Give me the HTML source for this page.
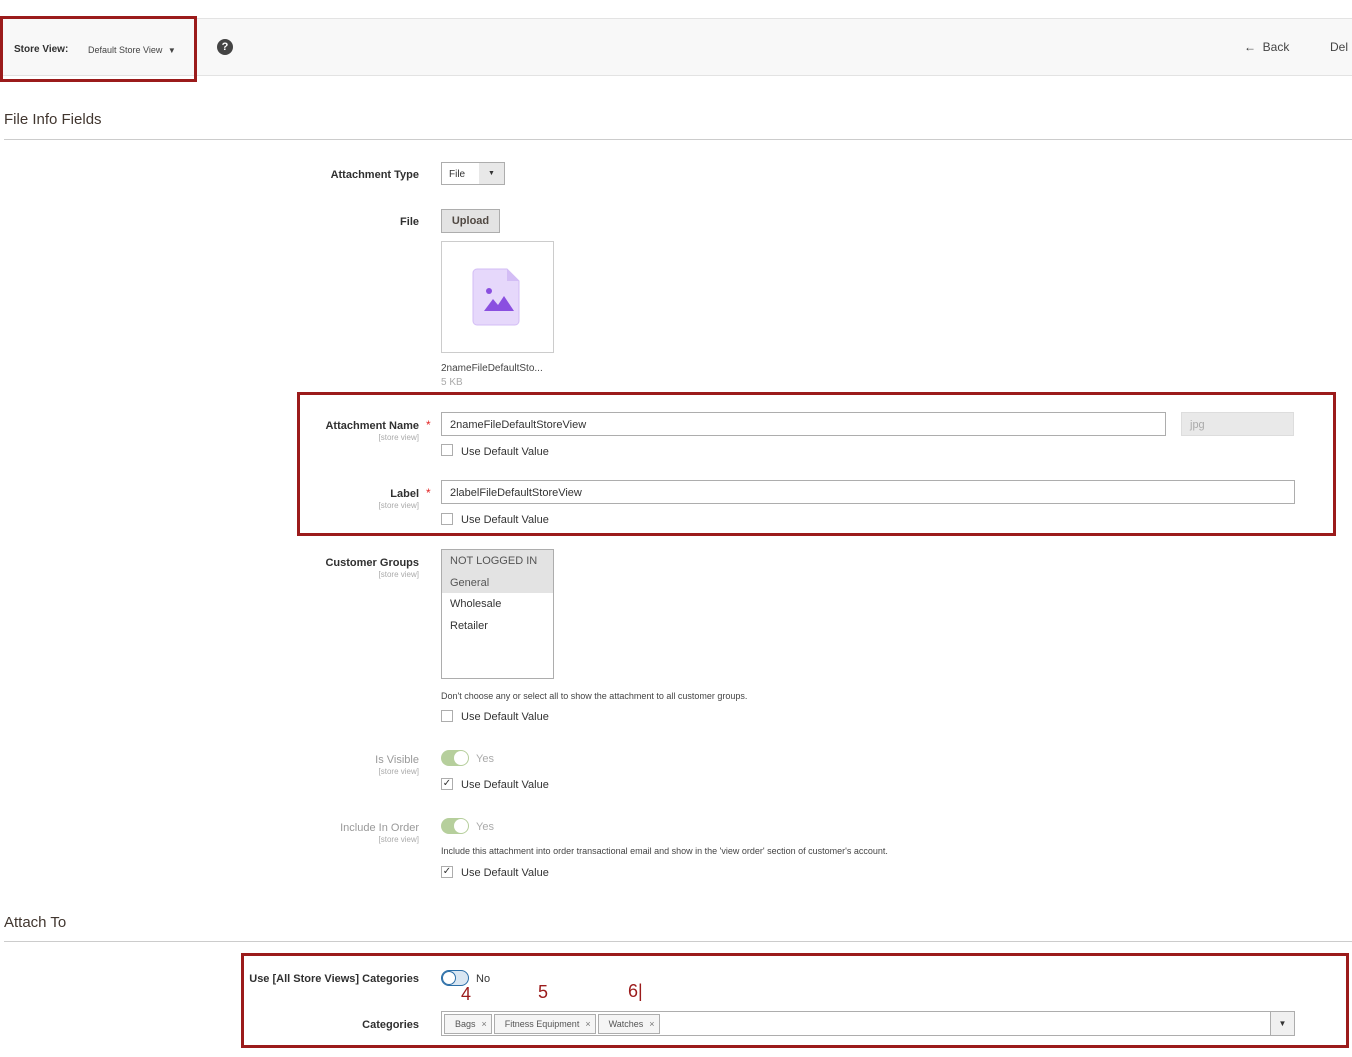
<!DOCTYPE html>
<html><head><meta charset="utf-8"><style>
*{box-sizing:border-box;margin:0;padding:0}
body{width:1352px;height:1057px;position:relative;background:#fff;font-family:"Liberation Sans",sans-serif;color:#333;overflow:hidden;font-size:11px}
.a{position:absolute;white-space:nowrap}
.lbl{position:absolute;right:933px;text-align:right;font-size:11px;color:#303030;font-weight:bold;white-space:nowrap;margin-top:1px}
.sv{display:block;font-size:8px;color:#aaa;font-weight:normal;margin-top:1px}
.red{position:absolute;border:3px solid #9b1b1b}
.inp{position:absolute;border:1px solid #adadad;background:#fff;height:24px;padding:6px 8px;font-size:11px;color:#333;white-space:nowrap}
.cb{position:absolute;width:12px;height:12px;border:1px solid #adadad;background:#fff}
.cbt{position:absolute;font-size:11px;color:#333;white-space:nowrap;margin-top:1px}
.star{position:absolute;color:#e22626;font-size:12px}
.tog{position:absolute;width:28px;height:16px;border-radius:8px}
.tog i{position:absolute;top:1px;width:14px;height:14px;border-radius:50%;background:#fff}
.tag{display:inline-block;border:1px solid #adadad;background:#f5f5f5;height:20px;padding:4px 4px 0 10px;font-size:9px;color:#555;margin-right:2px;vertical-align:top}
.tag b{font-weight:normal;margin-left:6px;color:#777}
</style></head><body>
<div class="a" style="left:0;top:18px;width:1352px;height:58px;background:#f8f8f8;border-top:1px solid #e3e3e3;border-bottom:1px solid #e3e3e3"></div>
<div class="red" style="left:0;top:16px;width:197px;height:66px"></div>
<div class="a" style="left:14px;top:44px;font-size:10px;font-weight:bold;color:#303030">Store View:</div>
<div class="a" style="left:88px;top:45px;font-size:9px;color:#444">Default Store View <span style="font-size:8px;margin-left:3px">▼</span></div>
<div class="a" style="left:217px;top:39px;width:16px;height:16px;border-radius:50%;background:#444;color:#fff;font-weight:bold;font-size:11px;text-align:center;line-height:16px">?</div>
<div class="a" style="left:1244px;top:40px;font-size:12px;color:#333">←&nbsp;&nbsp;<span style="color:#444">Back</span></div>
<div class="a" style="left:1330px;top:40px;font-size:12px;color:#444">Del</div>

<div class="a" style="left:4px;top:111px;font-size:15px;color:#41362f">File Info Fields</div>
<div class="a" style="left:4px;top:139px;width:1348px;height:1px;background:#ccc"></div>

<div class="lbl" style="top:168px">Attachment Type</div>
<div class="a" style="left:441px;top:162px;width:64px;height:23px;border:1px solid #adadad;background:#fff"></div>
<div class="a" style="left:449px;top:169px;font-size:10px">File</div>
<div class="a" style="left:479px;top:163px;width:25px;height:21px;background:#e8e8e8;font-size:7px;text-align:center;line-height:21px">▼</div>

<div class="lbl" style="top:215px">File</div>
<div class="a" style="left:441px;top:209px;width:59px;height:24px;background:#e3e3e3;border:1px solid #adadad;font-size:11px;font-weight:bold;color:#514943;text-align:center;line-height:22px">Upload</div>
<div class="a" style="left:441px;top:241px;width:113px;height:112px;border:1px solid #ccc;background:#fff">
<svg width="113" height="112" style="position:absolute;left:-1px;top:-1px"><path d="M36 28h30l12 12v40a4 4 0 0 1-4 4H36a4 4 0 0 1-4-4V32a4 4 0 0 1 4-4z" fill="#e6d8fb" stroke="#d3bdf5"/><path d="M66 28v12h12z" fill="#d3bdf5"/><circle cx="48" cy="50" r="3" fill="#8a4fe0"/><path d="M43 70l9-12 5 6 6-9 10 15z" fill="#8a4fe0"/></svg>
</div>
<div class="a" style="left:441px;top:363px;font-size:10px;color:#444">2nameFileDefaultSto...</div>
<div class="a" style="left:441px;top:377px;font-size:10px;color:#aaa">5 KB</div>

<div class="red" style="left:297px;top:392px;width:1039px;height:144px"></div>
<div class="lbl" style="top:419px">Attachment Name<span class="sv">[store view]</span></div>
<div class="star" style="left:426px;top:418px">*</div>
<div class="inp" style="left:441px;top:412px;width:725px">2nameFileDefaultStoreView</div>
<div class="inp" style="left:1181px;top:412px;width:113px;background:#e9e9e9;border-color:#ddd;color:#aaa">jpg</div>
<div class="cb" style="left:441px;top:444px"></div><div class="cbt" style="left:461px;top:445px">Use Default Value</div>

<div class="lbl" style="top:487px">Label<span class="sv">[store view]</span></div>
<div class="star" style="left:426px;top:486px">*</div>
<div class="inp" style="left:441px;top:480px;width:854px">2labelFileDefaultStoreView</div>
<div class="cb" style="left:441px;top:513px"></div><div class="cbt" style="left:461px;top:513px">Use Default Value</div>

<div class="lbl" style="top:556px">Customer Groups<span class="sv">[store view]</span></div>
<div class="a" style="left:441px;top:549px;width:113px;height:130px;border:1px solid #adadad;background:#fff">
<div style="background:#e3e3e3;height:43px"></div>
<div class="a" style="left:8px;top:5px;color:#555">NOT LOGGED IN</div>
<div class="a" style="left:8px;top:27px;color:#555">General</div>
<div class="a" style="left:8px;top:48px;color:#333">Wholesale</div>
<div class="a" style="left:8px;top:70px;color:#333">Retailer</div>
</div>
<div class="a" style="left:441px;top:691px;font-size:9px;color:#444">Don't choose any or select all to show the attachment to all customer groups.</div>
<div class="cb" style="left:441px;top:710px"></div><div class="cbt" style="left:461px;top:710px">Use Default Value</div>

<div class="lbl" style="top:753px;color:#999;font-weight:normal">Is Visible<span class="sv">[store view]</span></div>
<div class="tog" style="left:441px;top:750px;background:#b6cf9c"><i style="left:13px"></i></div>
<div class="a" style="left:476px;top:753px;color:#aaa">Yes</div>
<div class="cb" style="left:441px;top:778px;font-size:10px;line-height:10px;text-align:center">✓</div><div class="cbt" style="left:461px;top:778px">Use Default Value</div>

<div class="lbl" style="top:821px;color:#999;font-weight:normal">Include In Order<span class="sv">[store view]</span></div>
<div class="tog" style="left:441px;top:818px;background:#b6cf9c"><i style="left:13px"></i></div>
<div class="a" style="left:476px;top:821px;color:#aaa">Yes</div>
<div class="a" style="left:441px;top:846px;font-size:9px;color:#444">Include this attachment into order transactional email and show in the 'view order' section of customer's account.</div>
<div class="cb" style="left:441px;top:866px;font-size:10px;line-height:10px;text-align:center">✓</div><div class="cbt" style="left:461px;top:866px">Use Default Value</div>

<div class="a" style="left:4px;top:914px;font-size:15px;color:#41362f">Attach To</div>
<div class="a" style="left:4px;top:941px;width:1348px;height:1px;background:#ccc"></div>

<div class="red" style="left:241px;top:953px;width:1108px;height:95px"></div>
<div class="lbl" style="top:972px">Use [All Store Views] Categories</div>
<div class="tog" style="left:441px;top:970px;background:#d9e6f2;border:1px solid #2b6ea7"><i style="left:0;top:0;border:1px solid #2b6ea7"></i></div>
<div class="a" style="left:476px;top:973px">No</div>
<div class="a" style="left:461px;top:984px;font-size:18px;color:#9b1b1b">4</div>
<div class="a" style="left:538px;top:982px;font-size:18px;color:#9b1b1b">5</div>
<div class="a" style="left:628px;top:981px;font-size:18px;color:#9b1b1b">6|</div>
<div class="lbl" style="top:1018px">Categories</div>
<div class="a" style="left:441px;top:1011px;width:854px;height:25px;border:1px solid #adadad;background:#fff;padding:2px">
<span class="tag">Bags<b>×</b></span><span class="tag">Fitness Equipment<b>×</b></span><span class="tag">Watches<b>×</b></span>
<div class="a" style="right:0;top:0;width:24px;height:23px;border-left:1px solid #adadad;background:#f0f0f0;font-size:8px;text-align:center;line-height:23px">▼</div>
</div>
</body></html>
